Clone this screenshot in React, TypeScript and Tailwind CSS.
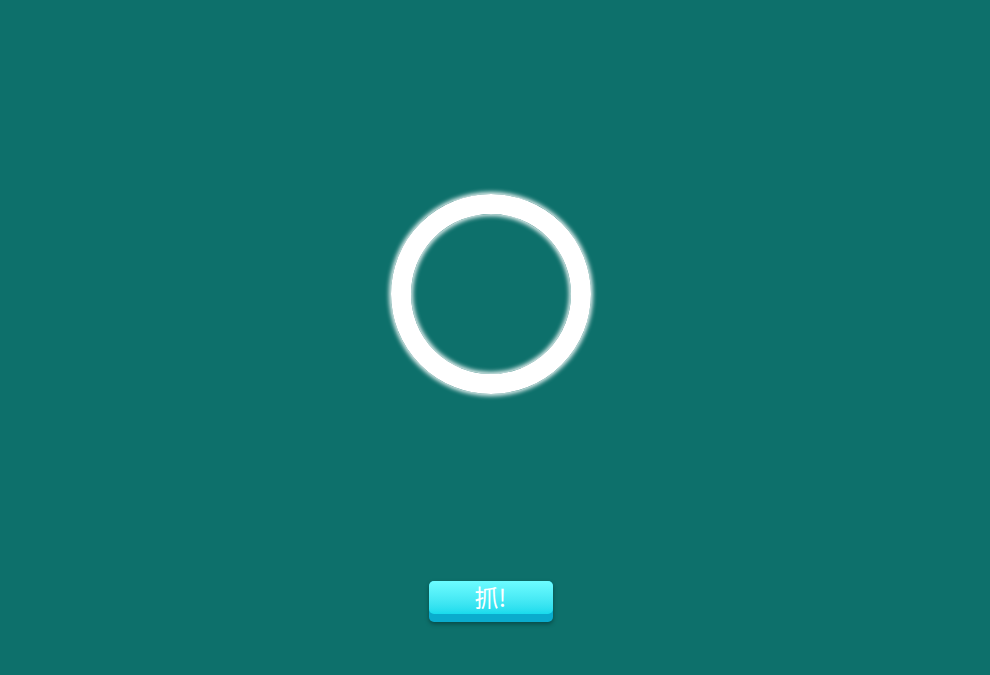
export default function App() {
  return (
    <div className="w-[990px] h-[675px] bg-[#0d706b] flex flex-col items-center pr-[9px] pt-[194px] overflow-hidden" style={{ fontFamily: '"Noto Sans CJK SC", "Noto Sans", sans-serif' }}>
      <div className="w-[200px] h-[200px] rounded-full border-[20px] border-white shadow-[0_0_4px_2px_rgba(255,255,255,0.9),inset_0_0_4px_2px_rgba(255,255,255,0.9)]" />
      <button className="mt-[187px] w-[124px] h-[41px] rounded-[5px] bg-[#0aaccd] shadow-[0_2px_4px_rgba(0,0,0,0.35)] flex flex-col p-0">
        <div className="w-full h-[33px] rounded-[5px] bg-gradient-to-b from-[#6cfcff] to-[#17dbec] flex items-center justify-center text-white text-[24px] leading-none pb-[1px]">
          抓!
        </div>
      </button>
    </div>
  );
}
